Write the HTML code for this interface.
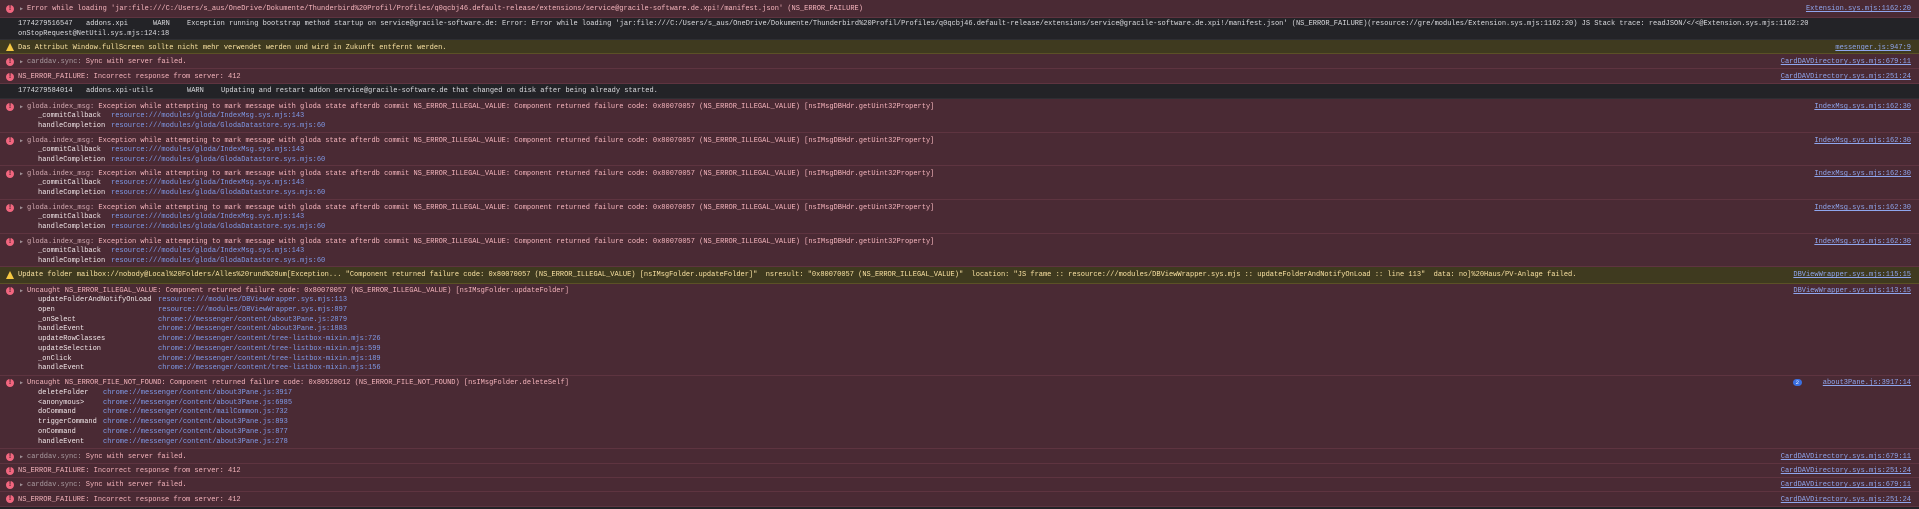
<!DOCTYPE html>
<html><head><meta charset="utf-8"><style>
html,body{margin:0;padding:0;width:1919px;height:509px;overflow:hidden;background:#232327;}
body{position:relative;font-family:"Liberation Mono",monospace;font-size:7px;line-height:10px;}
.r{position:absolute;left:0;width:1919px;border-bottom:1px solid #5e3440;box-sizing:border-box;}
.e{background:#4a2a34;color:#f6b5bd;}
.w{background:#3f3a1f;color:#fbe3a3;border-bottom-color:#5b5126;}
.d{background:#232327;color:#dcdce0;border-bottom-color:#2e2e33;}
.r span{position:absolute;white-space:pre;}
.g{color:#a99ba0;}
.gp{color:#d3a9b1;}
.lk{color:#8fa6ee;text-decoration:underline;right:8px;}
.lc{color:#7f9ae8;}
.fn{color:#f2e8ea;}
.ic{width:8px;height:8px;border-radius:50%;background:#f2667f;color:#3a1f27;font-weight:bold;font-family:"Liberation Sans",sans-serif;font-size:7px;line-height:8px;text-align:center;}
.tri{width:0;height:0;border-left:4.5px solid transparent;border-right:4.5px solid transparent;border-bottom:8px solid #f5c842;}
.ar{color:#a09096;font-size:5px;}
.bd{background:#3a6fe0;color:#fff;border-radius:4px;padding:0 3px;line-height:7px;font-size:5.5px;}
</style></head><body>

<div class="r e" style="top:0;height:18px">
<span class="ic" style="left:6px;top:5px">!</span><span class="ar" style="left:20px;top:4px">▶</span>
<span style="left:27px;top:4px">Error while loading 'jar:file:///C:/Users/s_aus/OneDrive/Dokumente/Thunderbird%20Profil/Profiles/q0qcbj46.default-release/extensions/service@gracile-software.de.xpi!/manifest.json' (NS_ERROR_FAILURE)</span>
<span class="lk" style="top:4px">Extension.sys.mjs:1162:20</span></div>

<div class="r d" style="top:18px;height:22px">
<span style="left:18px;top:1px">1774279516547</span><span style="left:86px;top:1px">addons.xpi</span><span style="left:153px;top:1px">WARN</span>
<span style="left:187px;top:1px">Exception running bootstrap method startup on service@gracile-software.de: Error: Error while loading 'jar:file:///C:/Users/s_aus/OneDrive/Dokumente/Thunderbird%20Profil/Profiles/q0qcbj46.default-release/extensions/service@gracile-software.de.xpi!/manifest.json' (NS_ERROR_FAILURE)(resource://gre/modules/Extension.sys.mjs:1162:20) JS Stack trace: readJSON/&lt;/&lt;@Extension.sys.mjs:1162:20</span>
<span style="left:18px;top:11px">onStopRequest@NetUtil.sys.mjs:124:18</span></div>

<div class="r w" style="top:40px;height:14px">
<span class="tri" style="left:6px;top:3px"></span>
<span style="left:18px;top:3px">Das Attribut Window.fullScreen sollte nicht mehr verwendet werden und wird in Zukunft entfernt werden.</span>
<span class="lk" style="top:3px">messenger.js:947:9</span></div>

<div class="r e" style="top:54px;height:15px">
<span class="ic" style="left:6px;top:4px">!</span><span class="ar" style="left:20px;top:3px">▶</span>
<span style="left:27px;top:3px"><span class="g" style="position:static">carddav.sync:</span> Sync with server failed.</span>
<span class="lk" style="top:3px">CardDAVDirectory.sys.mjs:679:11</span></div>

<div class="r e" style="top:69px;height:15px">
<span class="ic" style="left:6px;top:4px">!</span>
<span style="left:18px;top:3px">NS_ERROR_FAILURE: Incorrect response from server: 412</span>
<span class="lk" style="top:3px">CardDAVDirectory.sys.mjs:251:24</span></div>

<div class="r d" style="top:84px;height:15px">
<span style="left:18px;top:2px">1774279584014</span><span style="left:86px;top:2px">addons.xpi-utils</span><span style="left:187px;top:2px">WARN</span>
<span style="left:221px;top:2px">Updating and restart addon service@gracile-software.de that changed on disk after being already started.</span></div>

<div class="r e" style="top:99px;height:34px">
<span class="ic" style="left:6px;top:4px">!</span><span class="ar" style="left:20px;top:3px">▶</span>
<span style="left:27px;top:3px"><span class="gp" style="position:static">gloda.index_msg:</span> Exception while attempting to mark message with gloda state afterdb commit NS_ERROR_ILLEGAL_VALUE: Component returned failure code: 0x80070057 (NS_ERROR_ILLEGAL_VALUE) [nsIMsgDBHdr.getUint32Property]</span>
<span class="lk" style="top:3px">IndexMsg.sys.mjs:162:30</span>
<span class="fn" style="left:38px;top:12px">_commitCallback</span><span class="lc" style="left:111px;top:12px">resource:///modules/gloda/IndexMsg.sys.mjs:143</span>
<span class="fn" style="left:38px;top:22px">handleCompletion</span><span class="lc" style="left:111px;top:22px">resource:///modules/gloda/GlodaDatastore.sys.mjs:60</span></div>

<div class="r e" style="top:133px;height:33px">
<span class="ic" style="left:6px;top:4px">!</span><span class="ar" style="left:20px;top:3px">▶</span>
<span style="left:27px;top:3px"><span class="gp" style="position:static">gloda.index_msg:</span> Exception while attempting to mark message with gloda state afterdb commit NS_ERROR_ILLEGAL_VALUE: Component returned failure code: 0x80070057 (NS_ERROR_ILLEGAL_VALUE) [nsIMsgDBHdr.getUint32Property]</span>
<span class="lk" style="top:3px">IndexMsg.sys.mjs:162:30</span>
<span class="fn" style="left:38px;top:12px">_commitCallback</span><span class="lc" style="left:111px;top:12px">resource:///modules/gloda/IndexMsg.sys.mjs:143</span>
<span class="fn" style="left:38px;top:22px">handleCompletion</span><span class="lc" style="left:111px;top:22px">resource:///modules/gloda/GlodaDatastore.sys.mjs:60</span></div>

<div class="r e" style="top:166px;height:34px">
<span class="ic" style="left:6px;top:4px">!</span><span class="ar" style="left:20px;top:3px">▶</span>
<span style="left:27px;top:3px"><span class="gp" style="position:static">gloda.index_msg:</span> Exception while attempting to mark message with gloda state afterdb commit NS_ERROR_ILLEGAL_VALUE: Component returned failure code: 0x80070057 (NS_ERROR_ILLEGAL_VALUE) [nsIMsgDBHdr.getUint32Property]</span>
<span class="lk" style="top:3px">IndexMsg.sys.mjs:162:30</span>
<span class="fn" style="left:38px;top:12px">_commitCallback</span><span class="lc" style="left:111px;top:12px">resource:///modules/gloda/IndexMsg.sys.mjs:143</span>
<span class="fn" style="left:38px;top:22px">handleCompletion</span><span class="lc" style="left:111px;top:22px">resource:///modules/gloda/GlodaDatastore.sys.mjs:60</span></div>

<div class="r e" style="top:200px;height:34px">
<span class="ic" style="left:6px;top:4px">!</span><span class="ar" style="left:20px;top:3px">▶</span>
<span style="left:27px;top:3px"><span class="gp" style="position:static">gloda.index_msg:</span> Exception while attempting to mark message with gloda state afterdb commit NS_ERROR_ILLEGAL_VALUE: Component returned failure code: 0x80070057 (NS_ERROR_ILLEGAL_VALUE) [nsIMsgDBHdr.getUint32Property]</span>
<span class="lk" style="top:3px">IndexMsg.sys.mjs:162:30</span>
<span class="fn" style="left:38px;top:12px">_commitCallback</span><span class="lc" style="left:111px;top:12px">resource:///modules/gloda/IndexMsg.sys.mjs:143</span>
<span class="fn" style="left:38px;top:22px">handleCompletion</span><span class="lc" style="left:111px;top:22px">resource:///modules/gloda/GlodaDatastore.sys.mjs:60</span></div>

<div class="r e" style="top:234px;height:33px">
<span class="ic" style="left:6px;top:4px">!</span><span class="ar" style="left:20px;top:3px">▶</span>
<span style="left:27px;top:3px"><span class="gp" style="position:static">gloda.index_msg:</span> Exception while attempting to mark message with gloda state afterdb commit NS_ERROR_ILLEGAL_VALUE: Component returned failure code: 0x80070057 (NS_ERROR_ILLEGAL_VALUE) [nsIMsgDBHdr.getUint32Property]</span>
<span class="lk" style="top:3px">IndexMsg.sys.mjs:162:30</span>
<span class="fn" style="left:38px;top:12px">_commitCallback</span><span class="lc" style="left:111px;top:12px">resource:///modules/gloda/IndexMsg.sys.mjs:143</span>
<span class="fn" style="left:38px;top:22px">handleCompletion</span><span class="lc" style="left:111px;top:22px">resource:///modules/gloda/GlodaDatastore.sys.mjs:60</span></div>

<div class="r w" style="top:267px;height:17px">
<span class="tri" style="left:6px;top:4px"></span>
<span style="left:18px;top:3px">Update folder mailbox://nobody@Local%20Folders/Alles%20rund%20um[Exception... "Component returned failure code: 0x80070057 (NS_ERROR_ILLEGAL_VALUE) [nsIMsgFolder.updateFolder]"  nsresult: "0x80070057 (NS_ERROR_ILLEGAL_VALUE)"  location: "JS frame :: resource:///modules/DBViewWrapper.sys.mjs :: updateFolderAndNotifyOnLoad :: line 113"  data: no]%20Haus/PV-Anlage failed.</span>
<span class="lk" style="top:3px">DBViewWrapper.sys.mjs:115:15</span></div>

<div class="r e" style="top:284px;height:92px">
<span class="ic" style="left:6px;top:3px">!</span><span class="ar" style="left:20px;top:2px">▶</span>
<span style="left:27px;top:2px">Uncaught NS_ERROR_ILLEGAL_VALUE: Component returned failure code: 0x80070057 (NS_ERROR_ILLEGAL_VALUE) [nsIMsgFolder.updateFolder]</span>
<span class="lk" style="top:2px">DBViewWrapper.sys.mjs:113:15</span>
<span class="fn" style="left:38px;top:11px">updateFolderAndNotifyOnLoad</span><span class="lc" style="left:158px;top:11px">resource:///modules/DBViewWrapper.sys.mjs:113</span>
<span class="fn" style="left:38px;top:21px">open</span><span class="lc" style="left:158px;top:21px">resource:///modules/DBViewWrapper.sys.mjs:897</span>
<span class="fn" style="left:38px;top:31px">_onSelect</span><span class="lc" style="left:158px;top:31px">chrome://messenger/content/about3Pane.js:2879</span>
<span class="fn" style="left:38px;top:40px">handleEvent</span><span class="lc" style="left:158px;top:40px">chrome://messenger/content/about3Pane.js:1883</span>
<span class="fn" style="left:38px;top:50px">updateRowClasses</span><span class="lc" style="left:158px;top:50px">chrome://messenger/content/tree-listbox-mixin.mjs:726</span>
<span class="fn" style="left:38px;top:60px">updateSelection</span><span class="lc" style="left:158px;top:60px">chrome://messenger/content/tree-listbox-mixin.mjs:599</span>
<span class="fn" style="left:38px;top:70px">_onClick</span><span class="lc" style="left:158px;top:70px">chrome://messenger/content/tree-listbox-mixin.mjs:189</span>
<span class="fn" style="left:38px;top:79px">handleEvent</span><span class="lc" style="left:158px;top:79px">chrome://messenger/content/tree-listbox-mixin.mjs:156</span></div>

<div class="r e" style="top:376px;height:73px">
<span class="ic" style="left:6px;top:3px">!</span><span class="ar" style="left:20px;top:2px">▶</span>
<span style="left:27px;top:2px">Uncaught NS_ERROR_FILE_NOT_FOUND: Component returned failure code: 0x80520012 (NS_ERROR_FILE_NOT_FOUND) [nsIMsgFolder.deleteSelf]</span>
<span class="bd" style="right:117px;top:3px">2</span>
<span class="lk" style="top:2px">about3Pane.js:3917:14</span>
<span class="fn" style="left:38px;top:12px">deleteFolder</span><span class="lc" style="left:103px;top:12px">chrome://messenger/content/about3Pane.js:3917</span>
<span class="fn" style="left:38px;top:22px">&lt;anonymous&gt;</span><span class="lc" style="left:103px;top:22px">chrome://messenger/content/about3Pane.js:6985</span>
<span class="fn" style="left:38px;top:31px">doCommand</span><span class="lc" style="left:103px;top:31px">chrome://messenger/content/mailCommon.js:732</span>
<span class="fn" style="left:38px;top:41px">triggerCommand</span><span class="lc" style="left:103px;top:41px">chrome://messenger/content/about3Pane.js:893</span>
<span class="fn" style="left:38px;top:51px">onCommand</span><span class="lc" style="left:103px;top:51px">chrome://messenger/content/about3Pane.js:877</span>
<span class="fn" style="left:38px;top:61px">handleEvent</span><span class="lc" style="left:103px;top:61px">chrome://messenger/content/about3Pane.js:278</span></div>

<div class="r e" style="top:449px;height:15px">
<span class="ic" style="left:6px;top:4px">!</span><span class="ar" style="left:20px;top:3px">▶</span>
<span style="left:27px;top:3px"><span class="g" style="position:static">carddav.sync:</span> Sync with server failed.</span>
<span class="lk" style="top:3px">CardDAVDirectory.sys.mjs:679:11</span></div>
<div class="r e" style="top:464px;height:14px">
<span class="ic" style="left:6px;top:3px">!</span>
<span style="left:18px;top:2px">NS_ERROR_FAILURE: Incorrect response from server: 412</span>
<span class="lk" style="top:2px">CardDAVDirectory.sys.mjs:251:24</span></div>
<div class="r e" style="top:478px;height:14px">
<span class="ic" style="left:6px;top:3px">!</span><span class="ar" style="left:20px;top:2px">▶</span>
<span style="left:27px;top:2px"><span class="g" style="position:static">carddav.sync:</span> Sync with server failed.</span>
<span class="lk" style="top:2px">CardDAVDirectory.sys.mjs:679:11</span></div>
<div class="r e" style="top:492px;height:15px">
<span class="ic" style="left:6px;top:3px">!</span>
<span style="left:18px;top:3px">NS_ERROR_FAILURE: Incorrect response from server: 412</span>
<span class="lk" style="top:3px">CardDAVDirectory.sys.mjs:251:24</span></div>
</body></html>
